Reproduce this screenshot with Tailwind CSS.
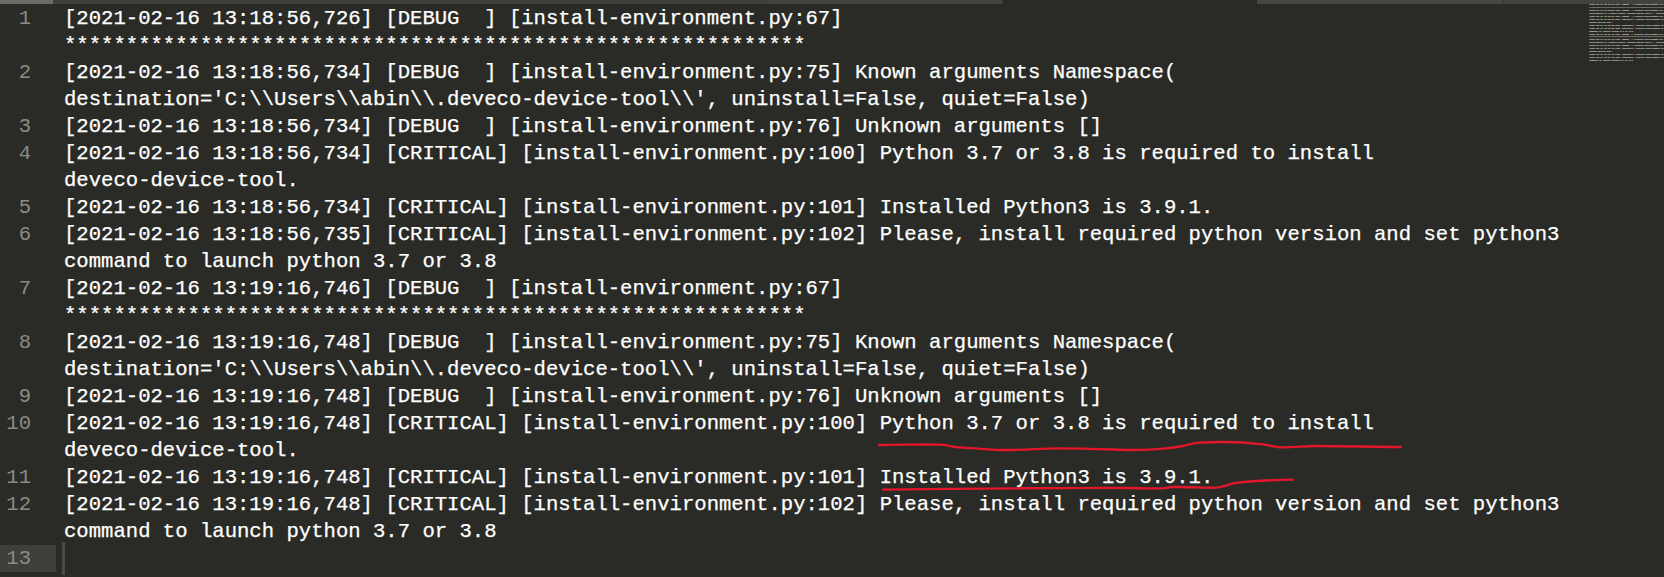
<!DOCTYPE html>
<html><head><meta charset="utf-8"><script src="https://cdn.jsdelivr.net/npm/@tailwindcss/browser@4"></script></head>
<body class="m-0 bg-[#2a2b26]">
<div class="relative w-[1664px] h-[577px] overflow-hidden bg-[#2a2b26] font-['Liberation_Mono',monospace] text-[20.6px] leading-[27px] text-white [-webkit-text-stroke:0.25px_white]">
  <div class="flex h-1 bg-[#383934]">
    <div class="w-[53px] bg-[#6a6b66]"></div>
    <div class="w-[244px] bg-[#3f403b]"></div>
    <div class="w-[236px] ml-px bg-[#3f403b]"></div>
    <div class="w-[230px] ml-px bg-[#3f403b]"></div>
    <div class="w-[236px] ml-px bg-[#42433e]"></div>
    <div class="w-[254px] ml-px bg-[#2a2b26]"></div>
    <div class="w-[246px] bg-[#464742]"></div>
    <div class="flex-1 ml-px bg-[#42433e]"></div>
  </div>
  <div class="pt-[1px] grid grid-cols-[56px_1fr] auto-rows-[27px] whitespace-pre">
    <div class="pr-[25px] text-right text-[#8a8b85] [-webkit-text-stroke:0px]">1</div><div class="pl-[8px]">[2021-02-16 13:18:56,726] [DEBUG  ] [install-environment.py:67]</div>
    <div></div><div class="pl-[8px]">************************************************************</div>
    <div class="pr-[25px] text-right text-[#8a8b85] [-webkit-text-stroke:0px]">2</div><div class="pl-[8px]">[2021-02-16 13:18:56,734] [DEBUG  ] [install-environment.py:75] Known arguments Namespace(</div>
    <div></div><div class="pl-[8px]">destination='C:\\Users\\abin\\.deveco-device-tool\\', uninstall=False, quiet=False)</div>
    <div class="pr-[25px] text-right text-[#8a8b85] [-webkit-text-stroke:0px]">3</div><div class="pl-[8px]">[2021-02-16 13:18:56,734] [DEBUG  ] [install-environment.py:76] Unknown arguments []</div>
    <div class="pr-[25px] text-right text-[#8a8b85] [-webkit-text-stroke:0px]">4</div><div class="pl-[8px]">[2021-02-16 13:18:56,734] [CRITICAL] [install-environment.py:100] Python 3.7 or 3.8 is required to install</div>
    <div></div><div class="pl-[8px]">deveco-device-tool.</div>
    <div class="pr-[25px] text-right text-[#8a8b85] [-webkit-text-stroke:0px]">5</div><div class="pl-[8px]">[2021-02-16 13:18:56,734] [CRITICAL] [install-environment.py:101] Installed Python3 is 3.9.1.</div>
    <div class="pr-[25px] text-right text-[#8a8b85] [-webkit-text-stroke:0px]">6</div><div class="pl-[8px]">[2021-02-16 13:18:56,735] [CRITICAL] [install-environment.py:102] Please, install required python version and set python3</div>
    <div></div><div class="pl-[8px]">command to launch python 3.7 or 3.8</div>
    <div class="pr-[25px] text-right text-[#8a8b85] [-webkit-text-stroke:0px]">7</div><div class="pl-[8px]">[2021-02-16 13:19:16,746] [DEBUG  ] [install-environment.py:67]</div>
    <div></div><div class="pl-[8px]">************************************************************</div>
    <div class="pr-[25px] text-right text-[#8a8b85] [-webkit-text-stroke:0px]">8</div><div class="pl-[8px]">[2021-02-16 13:19:16,748] [DEBUG  ] [install-environment.py:75] Known arguments Namespace(</div>
    <div></div><div class="pl-[8px]">destination='C:\\Users\\abin\\.deveco-device-tool\\', uninstall=False, quiet=False)</div>
    <div class="pr-[25px] text-right text-[#8a8b85] [-webkit-text-stroke:0px]">9</div><div class="pl-[8px]">[2021-02-16 13:19:16,748] [DEBUG  ] [install-environment.py:76] Unknown arguments []</div>
    <div class="pr-[25px] text-right text-[#8a8b85] [-webkit-text-stroke:0px]">10</div><div class="pl-[8px]">[2021-02-16 13:19:16,748] [CRITICAL] [install-environment.py:100] Python 3.7 or 3.8 is required to install</div>
    <div></div><div class="pl-[8px]">deveco-device-tool.</div>
    <div class="pr-[25px] text-right text-[#8a8b85] [-webkit-text-stroke:0px]">11</div><div class="pl-[8px]">[2021-02-16 13:19:16,748] [CRITICAL] [install-environment.py:101] Installed Python3 is 3.9.1.</div>
    <div class="pr-[25px] text-right text-[#8a8b85] [-webkit-text-stroke:0px]">12</div><div class="pl-[8px]">[2021-02-16 13:19:16,748] [CRITICAL] [install-environment.py:102] Please, install required python version and set python3</div>
    <div></div><div class="pl-[8px]">command to launch python 3.7 or 3.8</div>
    <div class="pr-[25px] text-right text-[#8a8b85] bg-[#3e3f3a] [-webkit-text-stroke:0px]">13</div><div class="pl-[6px]"><div class="w-[3px] h-[33px] -mt-[3px] bg-[#4a4b46]"></div></div>
  </div>
  <svg class="absolute left-0 top-0 pointer-events-none" width="1664" height="577" fill="none" stroke="#e5162a" stroke-width="2.3" stroke-linecap="round" stroke-linejoin="round">
    <path d="M879 445 C900 445 925 444 940 444.7 C950 445.5 955 447.5 963 447.7 C980 448.5 992 450 1007 450 C1025 450 1040 448.5 1057 448.3 C1090 448.3 1120 450 1130 450 C1142 450 1152 450 1163 448.7 C1172 447.7 1178 447 1183 446 C1190 444 1194 443 1200 442.7 C1208 442 1215 442 1223 442 C1238 442 1252 443 1263 444.3 C1270 445.5 1274 447 1280 447.3 C1292 447.6 1305 446 1317 446 C1345 446 1375 447 1401 447"/>
    <path d="M883 489.7 C925 489 975 488.5 1017 488.3 C1060 488 1100 487.7 1130 488 C1142 488.2 1155 488.8 1163 488.3 C1167 488 1169 487.2 1173 487 C1188 486.8 1205 488 1217 487.7 C1225 486.5 1230 484 1237 482.7 C1255 480.5 1275 480 1293 479.7"/>
  </svg>
  <div class="absolute left-[1589px] top-[4px] w-[75px] h-[60px] overflow-hidden whitespace-pre text-[2.1px] leading-[2.95px] text-[#a8a8a0] [-webkit-text-stroke:0.2px_#a8a8a0]">[2021-02-16 13:18:56,726] [DEBUG  ] [install-environment.py:67]
************************************************************
[2021-02-16 13:18:56,734] [DEBUG  ] [install-environment.py:75] Known arguments Namespace(
destination='C:\\Users\\abin\\.deveco-device-tool\\', uninstall=False, quiet=False)
[2021-02-16 13:18:56,734] [DEBUG  ] [install-environment.py:76] Unknown arguments []
[2021-02-16 13:18:56,734] [CRITICAL] [install-environment.py:100] Python 3.7 or 3.8 is required to install
deveco-device-tool.
[2021-02-16 13:18:56,734] [CRITICAL] [install-environment.py:101] Installed Python3 is 3.9.1.
[2021-02-16 13:18:56,735] [CRITICAL] [install-environment.py:102] Please, install required python version and set python3
command to launch python 3.7 or 3.8
[2021-02-16 13:19:16,746] [DEBUG  ] [install-environment.py:67]
************************************************************
[2021-02-16 13:19:16,748] [DEBUG  ] [install-environment.py:75] Known arguments Namespace(
destination='C:\\Users\\abin\\.deveco-device-tool\\', uninstall=False, quiet=False)
[2021-02-16 13:19:16,748] [DEBUG  ] [install-environment.py:76] Unknown arguments []
[2021-02-16 13:19:16,748] [CRITICAL] [install-environment.py:100] Python 3.7 or 3.8 is required to install
deveco-device-tool.
[2021-02-16 13:19:16,748] [CRITICAL] [install-environment.py:101] Installed Python3 is 3.9.1.
[2021-02-16 13:19:16,748] [CRITICAL] [install-environment.py:102] Please, install required python version and set python3
command to launch python 3.7 or 3.8</div>
</div>
</body></html>
